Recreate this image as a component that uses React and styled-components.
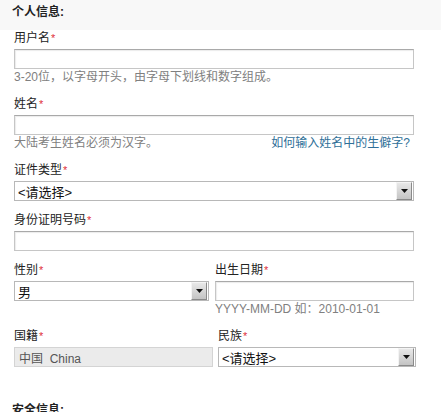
import React from 'react'
import styled, { createGlobalStyle } from 'styled-components'

const Global = createGlobalStyle`
  html, body { margin: 0; padding: 0; background: #fff; }
  body {
    font-family: "Liberation Sans", "Noto Sans CJK SC", sans-serif;
    font-size: 12px;
    color: #222;
  }
`

function Label({ children }) {
  return (
    <LabelText>
      {children}<Star>*</Star>
    </LabelText>
  )
}

function Select({ value }) {
  return (
    <SelectBox>
      <SelectValue>{value}</SelectValue>
      <DropBtn>
        <svg width="7" height="4" viewBox="0 0 7 4"><path d="M0 0h7L3.5 4z" fill="#111" /></svg>
      </DropBtn>
    </SelectBox>
  )
}

export default function App() {
  return (
    <Page>
      <Global />
      <SectionBar>个人信息:</SectionBar>
      <Form>
        <Field>
          <Label>用户名</Label>
          <Input />
          <Hint>3-20位，以字母开头，由字母下划线和数字组成。</Hint>
        </Field>
        <Field>
          <Label>姓名</Label>
          <Input />
          <HintRow>
            <Hint>大陆考生姓名必须为汉字。</Hint>
            <HelpLink>如何输入姓名中的生僻字?</HelpLink>
          </HintRow>
        </Field>
        <Field>
          <Label>证件类型</Label>
          <Select value="<请选择>" />
        </Field>
        <Field>
          <Label>身份证明号码</Label>
          <Input />
        </Field>
        <Pair left="195px" right="199px" gap="6px">
          <Field>
            <Label>性别</Label>
            <Select value="男" />
          </Field>
          <Field>
            <Label>出生日期</Label>
            <Input />
            <Hint>YYYY-MM-DD 如：2010-01-01</Hint>
          </Field>
        </Pair>
        <Pair left="199px" right="198px" gap="5px">
          <Field>
            <Label>国籍</Label>
            <Input disabled value="中国  China" readOnly />
          </Field>
          <Field>
            <Label>民族</Label>
            <Select value="<请选择>" />
          </Field>
        </Pair>
      </Form>
      <SectionBar bottom>安全信息:</SectionBar>
    </Page>
  )
}

const Page = styled.div`
  width: 441px;
  height: 412px;
  overflow: hidden;
`

const SectionBar = styled.div`
  height: 30px;
  line-height: 24px;
  padding-left: 12px;
  font-weight: bold;
  font-size: 12px;
  color: #222;
  background: ${p => (p.bottom ? '#fff' : '#f8f8f8')};
  margin-top: ${p => (p.bottom ? '31px' : '0')};
`

const Form = styled.div`
  padding-left: 14px;
  display: flex;
  flex-direction: column;
  gap: 11px;
`

const Field = styled.div`
  display: flex;
  flex-direction: column;
`

const LabelText = styled.div`
  line-height: 16px;
  margin-bottom: 3px;
  font-size: 12px;
  color: #222;
`

const Star = styled.span`
  color: #e0303a;
  font-size: 11px;
  vertical-align: top;
  margin-left: 1px;
`

const Input = styled.input`
  box-sizing: border-box;
  width: 100%;
  max-width: 400px;
  height: 20px;
  margin: 0;
  padding: 0 4px;
  border: 1px solid #c6c6c6;
  border-top-color: #a9a9a9;
  box-shadow: inset 1px 1px 1px #ececec;
  background: #fff;
  font-family: "Liberation Sans", "Noto Sans CJK SC", sans-serif;
  font-size: 12px;
  color: #555;
  outline: none;
  &:disabled {
    background: #ebebeb;
    color: #555;
    border-color: #d4d4d4;
  }
`

const Hint = styled.div`
  line-height: 16px;
  color: #808080;
  font-size: 12px;
`

const HintRow = styled.div`
  display: flex;
  justify-content: space-between;
  width: 396px;
`

const HelpLink = styled.a`
  line-height: 16px;
  color: #2f6f98;
  font-size: 12px;
  text-decoration: none;
  cursor: pointer;
`

const SelectBox = styled.div`
  box-sizing: border-box;
  width: 100%;
  max-width: 400px;
  height: 20px;
  border: 1px solid #b8b8b8;
  display: flex;
  align-items: center;
  justify-content: space-between;
  padding: 0 1px 0 3px;
  background: #fff;
`

const SelectValue = styled.span`
  font-size: 13px;
  color: #111;
`

const DropBtn = styled.div`
  box-sizing: border-box;
  width: 16px;
  height: 18px;
  display: flex;
  align-items: center;
  justify-content: center;
  background: linear-gradient(#e8e8e8, #c4c4c4);
  border: 1px solid #8a8a8a;
  border-top-color: #f4f4f4;
  border-left-color: #f4f4f4;
`

const Pair = styled.div`
  display: grid;
  grid-template-columns: ${p => p.left} ${p => p.right};
  column-gap: ${p => p.gap};
`
